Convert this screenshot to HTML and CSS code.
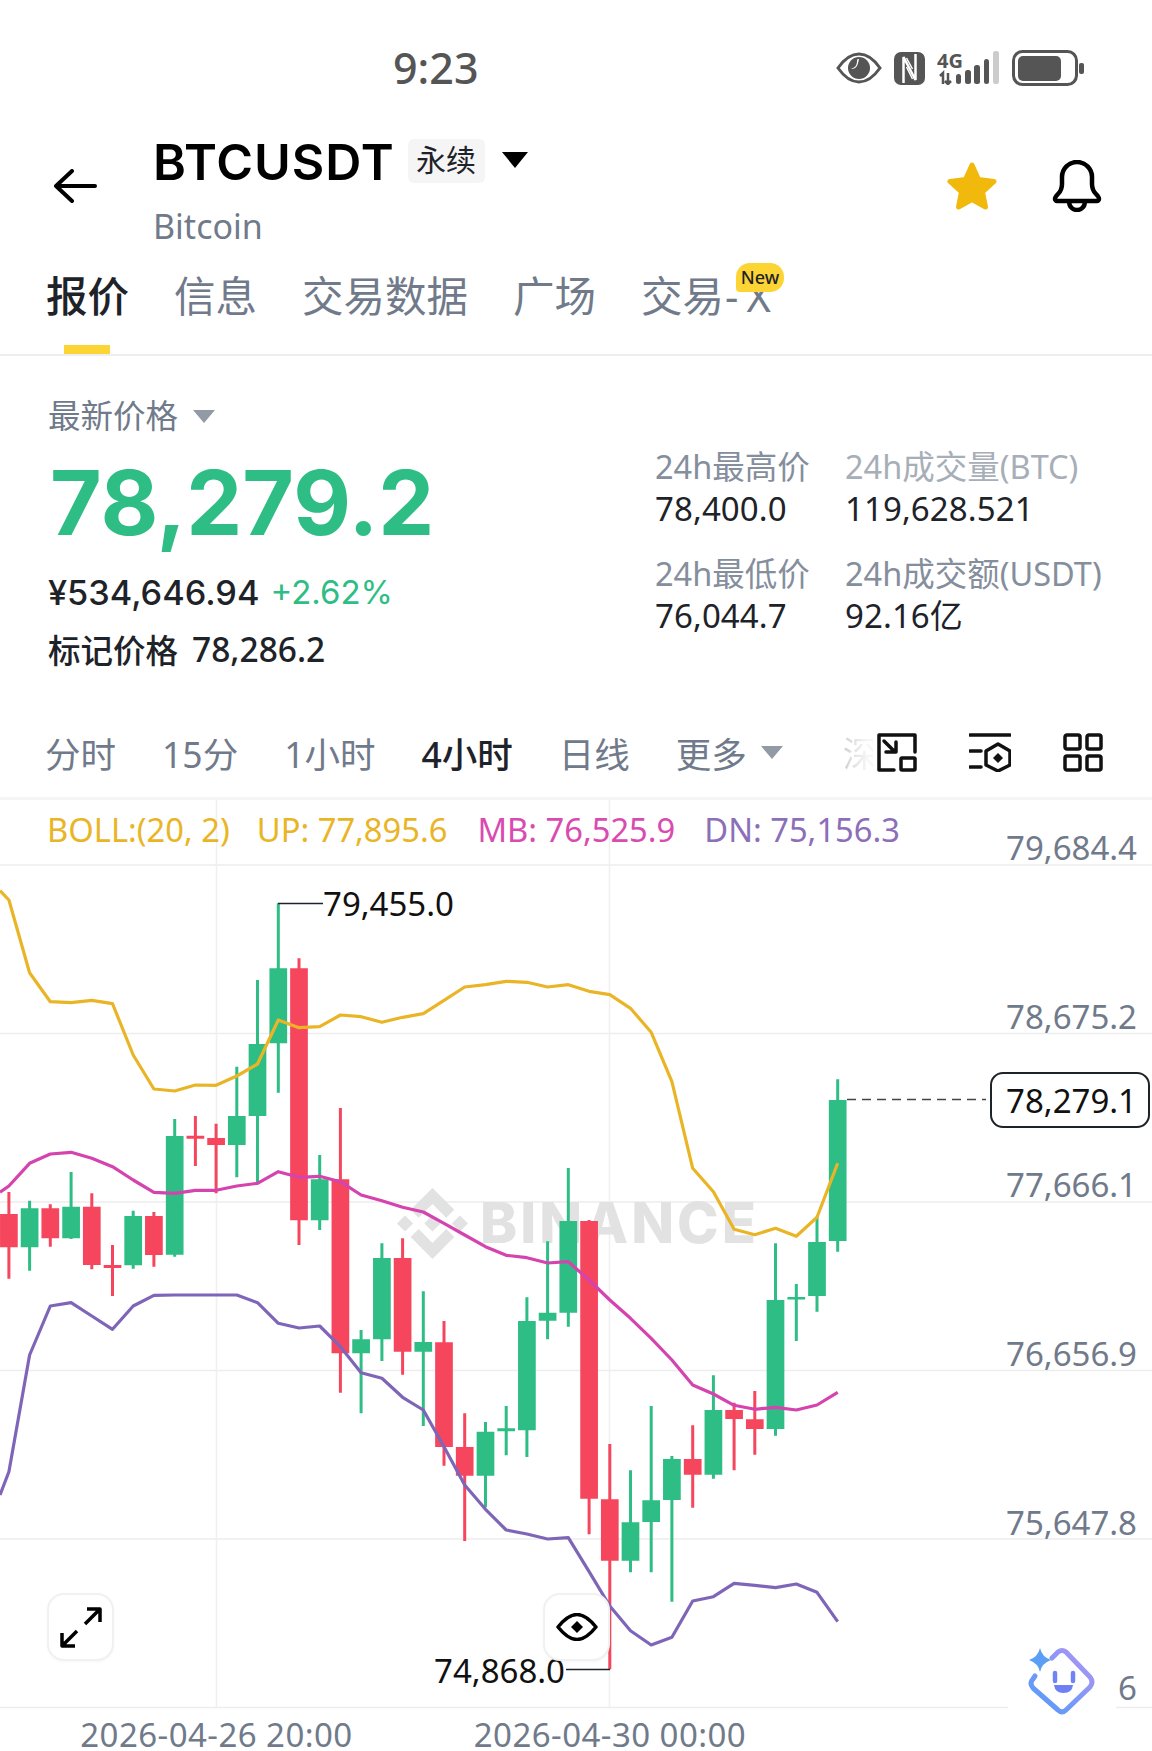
FILE: index.html
```html
<!DOCTYPE html>
<html lang="zh-CN">
<head>
<meta charset="utf-8">
<title>BTCUSDT</title>
<link rel="stylesheet" href="styles.css">
</head>
<body>
<div class="page">
  <div class="statusbar">
    <span class="clock">9:23</span>
    <div class="status-icons">
      <svg class="si-eye" width="46" height="32" viewBox="0 0 46 32"><path class="si-line" d="M2 16C9 6 16 2 23 2s14 4 21 14c-7 10-14 14-21 14S9 26 2 16z"/><circle class="si-fill" cx="23" cy="16" r="11"/><path class="si-white" d="M14 16c4 1 7-2 7-7 0-2 1-2 2-2-1 4-1 7-4 9-1 1-3 1-5 0z"/></svg>
      <svg class="si-nfc" width="31" height="33" viewBox="0 0 31 33"><rect class="si-fill" x="0" y="0" width="31" height="33" rx="7"/><path class="si-stripe" d="M9.500 31V5l12 23V2"/><path class="si-stripe-thin" d="M12.500 15l6 12M12.500 6l6 11"/></svg>
      <svg class="si-signal" width="63" height="40" viewBox="0 -6 63 40"><text class="si-4g" x="0" y="17">4G</text><path class="si-arrows" d="M3 25l3-3v11M11 22v11l3-3M11 33l-3-3"/><rect class="si-fill" x="19" y="23" width="5" height="10" rx="2.5"/><rect class="si-fill" x="28" y="19" width="6" height="14" rx="2.5"/><rect class="si-fill" x="37" y="14" width="6" height="19" rx="2.5"/><rect class="si-fill" x="47" y="8" width="5" height="25" rx="2.5"/><rect class="si-off" x="56" y="0" width="6" height="33" rx="2.5"/></svg>
      <svg class="si-bat" width="73" height="36" viewBox="0 0 73 36"><rect class="si-line" x="1.5" y="1.5" width="63" height="33" rx="9"/><rect class="si-fill" x="6" y="6" width="43" height="25" rx="5"/><rect class="si-fill" x="67" y="13" width="5" height="11" rx="2"/></svg>
    </div>
  </div>

  <header class="head">
    <svg class="back" width="44" height="34" viewBox="0 0 44 34"><path d="M42 17H4M19 2L3 17l16 15"/></svg>
    <div class="title-col">
      <div class="title-row">
        <span class="symbol">BTCUSDT</span>
        <span class="badge">永续</span>
        <span class="tri-black"></span>
      </div>
      <div class="coin-name">Bitcoin</div>
    </div>
    <svg class="star" width="52" height="49" viewBox="0 0 52 49"><path d="M26 4l6.5 14.5 15.5 2-11.500 10.500 3 15L26 38.500 12.500 46l3-15L4 20.500l15.500-2z"/></svg>
    <svg class="bell" width="50" height="52" viewBox="0 0 50 52"><path d="M3 39c0-2 1-3 3-5 3-3 4-6 4-10v-7a15 15 0 0 1 30 0v7c0 4 1 7 4 10 2 2 3 3 3 5 0 1-1 2-2 2H5c-1 0-2-1-2-2zM17 41c0 6 4 9 8 9s8-3 8-9"/></svg>
  </header>

  <nav class="tabs">
    <span class="tab tab-active">报价</span>
    <span class="tab">信息</span>
    <span class="tab">交易数据</span>
    <span class="tab">广场</span>
    <span class="tab">交易<span class="tab-wide">-X</span><span class="new">New</span></span>
  </nav>

  <section class="market">
    <div class="market-left">
      <div class="price-label">最新价格<span class="tri-grey"></span></div>
      <div class="big-price">78,279.2</div>
      <div class="fiat-row"><span class="fiat">¥534,646.94</span><span class="change">+2.62%</span></div>
      <div class="mark-row"><span>标记价格</span><span class="mark-val">78,286.2</span></div>
    </div>
    <div class="stats">
      <div class="stat"><span class="stat-k">24h最高价</span><span class="stat-v">78,400.0</span></div>
      <div class="stat"><span class="stat-k stat-k-light">24h成交量(BTC)</span><span class="stat-v">119,628.521</span></div>
      <div class="stat"><span class="stat-k">24h最低价</span><span class="stat-v">76,044.7</span></div>
      <div class="stat"><span class="stat-k">24h成交额(USDT)</span><span class="stat-v">92.16亿</span></div>
    </div>
  </section>

  <div class="intervals">
    <span class="iv iv-1">分时</span>
    <span class="iv">15分</span>
    <span class="iv">1小时</span>
    <span class="iv iv-active">4小时</span>
    <span class="iv">日线</span>
    <span class="iv">更多</span>
    <span class="tri-grey tri-iv"></span>
    <span class="iv-fade">深</span>
    <div class="iv-icons">
      <svg width="40" height="39" viewBox="0 0 40 39"><path d="M17 37H2V2h36v17"/><rect x="24" y="25" width="14" height="12" rx="1"/><path d="M7 8l11 11M19 9v10H9"/></svg>
      <svg width="42" height="39" viewBox="0 0 42 39"><path d="M1 2h40M1 18h11M1 34h11"/><path d="M29 11l12 7v14l-12 6-12-6V18z"/><path class="iv-solid" d="M29 20l5 5-5 5-5-5z"/></svg>
      <svg width="40" height="39" viewBox="0 0 40 39"><rect x="2" y="2" width="15" height="14" rx="2"/><rect x="24" y="2" width="14" height="14" rx="2"/><rect x="2" y="23" width="15" height="14" rx="2"/><rect x="24" y="23" width="14" height="14" rx="2"/></svg>
    </div>
  </div>

  <section class="chart">
    <svg class="chart-svg" width="1152" height="951" viewBox="0 800 1152 951">
      <path class="grid" d="M0 865H1152M0 1033.500H1152M0 1202H1152M0 1370.500H1152M0 1539H1152M0 1707.500H1152"/>
      <path class="grid grid-v" d="M216.500 800V1707M609.500 800V1707"/>

      <path class="wm-logo" transform="translate(397 1188) scale(0.56)" d="M38.730 53.200l24.590-24.580 24.600 24.600 14.300-14.310L63.320 0 24.420 38.900zM0 63.310l14.300-14.310 14.310 14.310-14.310 14.300zM38.730 73.410l24.590 24.590 24.600-24.600 14.310 14.290-38.900 38.910-38.910-38.880v-.03zM98 63.310l14.300-14.310 14.310 14.300-14.310 14.320zM77.830 63.300l-14.510-14.520-10.730 10.730-1.240 1.230-2.540 2.540 14.510 14.500 14.510-14.470z"/>
      <text class="wm-text" x="480" y="1243">BINANCE</text>

      <path class="wick up" d="M29.600 1200.700V1270.700M71.100 1172V1239M133.200 1210.700V1268.700M174.700 1119V1256.700M236.800 1066.700V1177.300M257.500 980V1183.300M278.300 903.300V1092.700M319.700 1155V1230M361.100 1330V1413.300M381.900 1243.300V1361M423.300 1291.300V1426M485.500 1422V1507.300M506.200 1406V1455.300M526.900 1297.300V1457M547.600 1241.300V1339.300M568.300 1168V1326.700M630.500 1470.300V1572.300M651.200 1406V1572.300M671.900 1456V1601.700M713.400 1375.300V1478.700M775.500 1243.300V1435.700M796.300 1284V1341M817 1216.700V1311.700M837.700 1079.300V1251.700"/>
      <path class="wick down" d="M8.900 1192V1278.700M50.300 1204.300V1246.700M91.800 1193.300V1269.300M112.500 1245V1296M153.900 1212V1266.700M195.400 1116V1166M216.100 1123.700V1193.300M299 958.300V1245M340.400 1108V1392.700M402.600 1238.300V1374.700M444 1321V1465.700M464.700 1413.300V1541M589.100 1220V1534.300M609.800 1444V1669.300M692.700 1425.300V1507.700M734.100 1402.700V1470.300M754.800 1391V1454.700"/>
      <path class="body up" d="M29.600 1208.300V1247.300M71.100 1206.700V1238.300M133.200 1216V1265.300M174.700 1136V1254.700M236.800 1116V1145M257.500 1044V1116M278.300 968.300V1043.300M319.700 1179.300V1220.300M361.100 1339.300V1353.300M381.900 1258V1339.300M423.300 1342V1351.700M485.500 1431.700V1475.700M506.200 1428.300V1431.300M526.900 1321V1430.300M547.600 1312.700V1320.700M568.300 1221V1312.700M630.500 1522.300V1560.700M651.200 1500.300V1522M671.900 1459V1500M713.400 1410V1474.700M775.500 1300V1429M796.300 1297V1299.500M817 1242V1296M837.700 1100V1241"/>
      <path class="body down" d="M8.900 1214V1247.300M50.300 1208.300V1238.300M91.800 1206.700V1265M112.500 1265V1268M153.900 1216V1255M195.400 1135.700V1138.700M216.100 1138V1145M299 968.300V1220.300M340.400 1179.300V1353.300M402.600 1258V1351.700M444 1342.300V1447M464.700 1447V1475.700M589.100 1221V1498.700M609.800 1499.300V1560.700M692.700 1459V1474.700M734.100 1410V1419M754.800 1419.300V1429"/>

      <polyline class="band band-up" points="0,890.700 8.900,900 29.600,972.700 50.300,1001.700 71.100,1002.700 91.800,1000.300 112.500,1003.700 133.200,1055 153.900,1089 174.700,1091 195.400,1085 216.100,1085.300 236.800,1076 257.500,1064 278.300,1020 299,1027.700 319.700,1026.700 340.400,1015 361.100,1016.700 381.900,1022.300 402.600,1017.300 423.300,1013.700 444,1000.300 464.700,987 485.500,984.700 506.200,981.300 526.900,982.300 547.600,987 568.300,984.700 589.100,991.300 609.800,994.700 630.500,1008.300 651.200,1032.300 671.900,1081.700 692.700,1168.300 713.400,1191.700 734.100,1229.300 754.800,1234.700 775.500,1228.300 796.300,1236.300 817,1217.300 837.700,1163.300"/>
      <polyline class="band band-mid" points="0,1192.300 8.900,1186 29.600,1163.300 50.300,1154 71.100,1152.300 91.800,1158.300 112.500,1166.700 133.200,1180 153.900,1192.300 174.700,1193.300 195.400,1190.300 216.100,1190.300 236.800,1186 257.500,1183.300 278.300,1171.700 299,1177.300 319.700,1176.300 340.400,1181.700 361.100,1195 381.900,1200.700 402.600,1207.300 423.300,1212 444,1223.300 464.700,1235 485.500,1246.700 506.200,1255.300 526.900,1257.700 547.600,1263 568.300,1261.700 589.100,1280 609.800,1300 630.500,1318.300 651.200,1338.300 671.900,1360 692.700,1385 713.400,1394 734.100,1405.300 754.800,1409.300 775.500,1407.300 796.300,1410 817,1405 837.700,1392.300"/>
      <polyline class="band band-dn" points="0,1495 8.900,1471.700 29.600,1355 50.300,1306 71.100,1302.700 91.800,1316 112.500,1329.300 133.200,1306 153.900,1295.300 174.700,1295 195.400,1295 216.100,1295 236.800,1295 257.500,1302.700 278.300,1323.300 299,1328 319.700,1326 340.400,1346.700 361.100,1372.700 381.900,1378.300 402.600,1397.300 423.300,1410 444,1446.700 464.700,1485 485.500,1509.300 506.200,1530 526.900,1534 547.600,1539 568.300,1537.700 589.100,1571.700 609.800,1606 630.500,1630.700 651.200,1645 671.900,1637.300 692.700,1601 713.400,1596.700 734.100,1583.300 754.800,1585.300 775.500,1587.700 796.300,1584 817,1592.300 837.700,1621.700"/>

      <path class="leader" d="M278 903.500H323M566 1669.500H610"/>
      <text class="val" x="323" y="916">79,455.0</text>
      <text class="val val-end" x="565" y="1683">74,868.0</text>

      <path class="last-line" d="M847 1099.500H986"/>
      <rect class="last-box" x="991" y="1073" width="158" height="54" rx="12"/>
      <text class="val val-end" x="1137" y="1113">78,279.1</text>

      <text class="axis axis-end" x="1137" y="860">79,684.4</text>
      <text class="axis axis-end" x="1137" y="1029">78,675.2</text>
      <text class="axis axis-end" x="1137" y="1197">77,666.1</text>
      <text class="axis axis-end" x="1137" y="1366">76,656.9</text>
      <text class="axis axis-end" x="1137" y="1535">75,647.8</text>
      <text class="axis axis-end" x="1137" y="1700">6</text>
      <text class="axis axis-mid axis-date" x="216.500" y="1747">2026-04-26 20:00</text>
      <text class="axis axis-mid axis-date" x="610" y="1747">2026-04-30 00:00</text>
    </svg>

    <div class="legend">
      <span class="lg-boll lg-first">BOLL:(20, 2)</span>
      <span class="lg-boll">UP: 77,895.6</span>
      <span class="lg-mb">MB: 76,525.9</span>
      <span class="lg-dn">DN: 75,156.3</span>
    </div>

    <div class="fab fab-expand">
      <svg width="42" height="41" viewBox="0 0 42 41"><path d="M25 17L39 3M27 2h13v13M17 24L3 38M2 26v13h13"/></svg>
    </div>
    <div class="fab fab-eye">
      <svg width="42" height="28" viewBox="0 0 42 28"><path d="M2 14C10 4 16 1.500 21 1.500S32 4 40 14C32 24 26 26.500 21 26.500S10 24 2 14z"/><path class="fab-solid" d="M21 8l6 6-6 6-6-6z"/></svg>
    </div>
    <div class="ai">
      <svg width="68" height="69" viewBox="0 0 68 69">
        <defs><linearGradient id="aiG" x1="0" y1="1" x2="1" y2="0"><stop offset="0" stop-color="#4f9cf9"/><stop offset="1" stop-color="#b294f5"/></linearGradient></defs>
        <path class="ai-frame" d="M24 11l6-6q4-3 8 0l24 25q4 5 0 10L38 63q-4 4-8 0L5 41q-4-5 0-9l2-3"/>
        <path class="ai-spark" d="M12 1q2 9 11 12-9 3-11 12-2-9-11-12 9-3 11-12z"/>
        <path class="ai-eyes" d="M27 26v8M45 26v8"/>
        <path class="ai-mouth" d="M26 38h19q-1 8-9.500 8T26 38z"/>
      </svg>
    </div>
  </section>
</div>
</body>
</html>
```
FILE: styles.css
```css
* { box-sizing: border-box; }
html, body { margin: 0; padding: 0; background: #fff; }
body { font-family: "Noto Sans", "Noto Sans CJK SC", sans-serif; color: #1e2329; }
.page { width: 1152px; height: 1751px; overflow: hidden; display: flex; flex-direction: column; }

/* status bar */
.statusbar { height: 136px; display: flex; align-items: center; justify-content: space-between; padding: 0 67px 0 393px; }
.clock { font-size: 43px; font-weight: 500; color: #555; line-height: 1; margin-top: -2px; }
.status-icons { display: flex; align-items: center; }
.si-line { fill: none; stroke: #555; stroke-width: 3; }
.si-fill { fill: #555; }
.si-white { fill: #fff; }
.si-off { fill: #ccc; }
.si-stripe { fill: none; stroke: #fff; stroke-width: 2.500; }
.si-stripe-thin { fill: none; stroke: #fff; stroke-width: 1.500; }
.si-4g { font-family: "Noto Sans", sans-serif; font-weight: 700; font-size: 20px; fill: #555; }
.si-arrows { fill: none; stroke: #555; stroke-width: 2.500; }
.si-nfc { margin-left: 12px; }
.si-signal { margin-left: 12px; margin-top: -6px; }
.si-bat { margin-left: 12px; }

/* header */
.head { height: 126px; display: flex; align-items: flex-start; padding-left: 53px; }
.back { margin-top: 33px; fill: none; stroke: #000; stroke-width: 4; stroke-linecap: round; stroke-linejoin: round; }
.title-col { margin-left: 56px; display: flex; flex-direction: column; }
.title-row { height: 50px; display: flex; align-items: center; margin-top: 1px; }
.symbol { font-family: Inter, sans-serif; font-weight: 600; font-size: 50px; color: #000; line-height: 50px; letter-spacing: 0.9px; }
.badge { margin-left: 13px; width: 77px; height: 44px; background: #f5f5f5; border-radius: 6px; font-size: 30px; line-height: 42px; text-align: center; color: #1e2329; margin-top: -2px; }
.tri-black { margin-left: 17px; margin-top: -4px; width: 0; height: 0; border-left: 13px solid transparent; border-right: 13px solid transparent; border-top: 16px solid #000; }
.coin-name { margin-top: 17px; font-size: 34px; line-height: 44px; color: #707a8a; }
.star { margin-left: auto; margin-top: 25px; fill: #f0b90b; stroke: #f0b90b; stroke-width: 5; stroke-linejoin: round; }
.bell { margin-left: 54px; margin-right: 50px; margin-top: 24px; fill: none; stroke: #000; stroke-width: 4.500; stroke-linejoin: round; }

/* tabs */
.tabs { height: 94px; display: flex; gap: 45px; padding-left: 46px; border-bottom: 2px solid #eee; flex: none; }
.tab { position: relative; padding-top: 12px; font-size: 41.500px; line-height: 44px; color: #707a8a; }
.tab-active { color: #1e2329; font-weight: 500; }
.tab-active::after { content: ""; position: absolute; left: 18px; bottom: 0; width: 46px; height: 9px; background: #fcd535; }
.tab-wide { letter-spacing: 8px; margin-left: 1px; }
.new { position: absolute; left: 95px; top: 1px; width: 48px; height: 29px; border-radius: 14px 14px 14px 4px; background: #fcd535; color: #1e2329; font-size: 18px; font-weight: 500; line-height: 29px; text-align: center; letter-spacing: 0; }

/* market */
.market { height: 351px; display: flex; justify-content: space-between; padding-left: 48px; flex: none; }
.market-left { display: flex; flex-direction: column; padding-top: 40px; }
.price-label { font-size: 32.500px; line-height: 40px; color: #707a8a; display: flex; align-items: center; }
.tri-grey { flex: none; width: 0; height: 0; border-left: 11px solid transparent; border-right: 11px solid transparent; border-top: 13px solid #929aa5; }
.price-label .tri-grey { margin-left: 15px; }
.big-price { margin-top: 17px; margin-left: 2px; font-family: Inter, sans-serif; font-weight: 700; font-size: 89px; line-height: 100px; color: #2ebd85; }
.fiat-row { margin-top: 19px; height: 40px; display: flex; align-items: center; gap: 11px; font-family: Inter, "Noto Sans", sans-serif; font-size: 33px; }
.fiat { font-weight: 500; color: #1e2329; font-size: 34.300px; }
.change { color: #2ebd85; }
.mark-row { margin-top: 17px; height: 40px; display: flex; align-items: center; gap: 14px; font-size: 32.500px; color: #1e2329; font-weight: 500; }
.mark-val { font-size: 33.500px; }
.stats { width: 497px; padding-top: 91px; display: grid; grid-template-columns: 190px 1fr; grid-auto-rows: 82px; row-gap: 25px; align-content: start; }
.stat { display: flex; flex-direction: column; gap: 2px; }
.stat-k { font-size: 32.500px; line-height: 40px; color: #848e9c; white-space: nowrap; }
.stat-k-light { color: #a7aeb8; }
.stat-v { font-size: 33px; letter-spacing: 0.1px; line-height: 40px; color: #1e2329; white-space: nowrap; }

/* intervals */
.intervals { height: 93px; display: flex; align-items: center; padding: 0 49px 0 45px; border-bottom: 3px solid #f5f5f5; flex: none; }
.iv { flex: none; white-space: nowrap; font-size: 35.500px; line-height: 44px; color: #707a8a; margin-left: 46px; margin-top: 4px; }
.iv-1 { margin-left: 0; }
.iv-active { color: #1e2329; font-weight: 500; }
.tri-iv { margin-left: 14px; }
.iv-fade { flex: none; margin-left: 60px; margin-top: 4px; font-size: 35px; line-height: 44px; color: transparent; background: linear-gradient(90deg, #d0d0d0, #f6f6f6 80%); -webkit-background-clip: text; background-clip: text; width: 30px; overflow: hidden; white-space: nowrap; }
.iv-icons { flex: none; display: flex; align-items: center; gap: 52px; margin-left: auto; }
.iv-icons svg { fill: none; stroke: #111; stroke-width: 3.500; stroke-linecap: round; stroke-linejoin: round; }
.iv-icons .iv-solid { fill: #111; stroke: none; }

/* chart */
.chart { position: relative; flex: 1; }
.chart-svg { display: block; }
.grid { fill: none; stroke: #ededed; stroke-width: 1.500; }
.grid-v { stroke: #f0f0f0; }
.wm-logo { fill: #e2e2e2; }
.wm-text { font-family: Inter, sans-serif; font-weight: 800; font-size: 56px; letter-spacing: 3px; fill: #e2e2e2; }
.wick { fill: none; stroke-width: 3; }
.body { fill: none; stroke-width: 17.700; }
.up { stroke: #2ebd85; }
.down { stroke: #f6465d; }
.band { fill: none; stroke-width: 3.200; stroke-linejoin: round; }
.band-up { stroke: #e9b526; }
.band-mid { stroke: #d543ae; }
.band-dn { stroke: #7f65b7; }
.leader { fill: none; stroke: #1e2329; stroke-width: 1.500; }
.val { font-family: "Noto Sans", sans-serif; font-size: 33px; fill: #111; }
.val-end { text-anchor: end; }
.last-line { fill: none; stroke: #444; stroke-width: 1.500; stroke-dasharray: 9 6; }
.last-box { fill: #fff; stroke: #1e2329; stroke-width: 2; }
.axis { font-family: "Noto Sans", sans-serif; font-size: 33px; fill: #707a8a; }
.axis-end { text-anchor: end; }
.axis-mid { text-anchor: middle; }
.axis-date { letter-spacing: 0.45px; }

.legend { position: absolute; left: 47px; top: 10px; display: flex; gap: 30px; font-size: 32.700px; line-height: 40px; }
.lg-boll { color: #e9b526; }
.lg-first { margin-right: -3px; }
.lg-mb { color: #d94bb0; }
.lg-dn { color: #8c6fb8; margin-left: -1px; }

.fab { position: absolute; top: 793px; height: 68px; display: flex; align-items: center; justify-content: center; background: #fff; border: 2px solid #f1f1f1; border-radius: 17px; box-shadow: 0 1px 3px rgba(0,0,0,.04); }
.fab svg { fill: none; stroke: #000; stroke-width: 3.500; stroke-linejoin: round; }
.fab-expand { left: 47px; width: 67px; }
.fab-eye { left: 543px; width: 67px; }
.fab .fab-solid { fill: #000; stroke: none; }
.ai { position: absolute; left: 1008px; top: 820px; width: 108px; height: 104px; background: #fff; padding: 27px 0 0 20px; }
.ai svg { display: block; }
.ai-frame { fill: none; stroke: url(#aiG); stroke-width: 5; stroke-linecap: round; stroke-linejoin: round; }
.ai-spark { fill: #5b9ef5; }
.ai-eyes { fill: none; stroke: #6f84f5; stroke-width: 4.500; stroke-linecap: round; }
.ai-mouth { fill: #6f7ff5; }
```
